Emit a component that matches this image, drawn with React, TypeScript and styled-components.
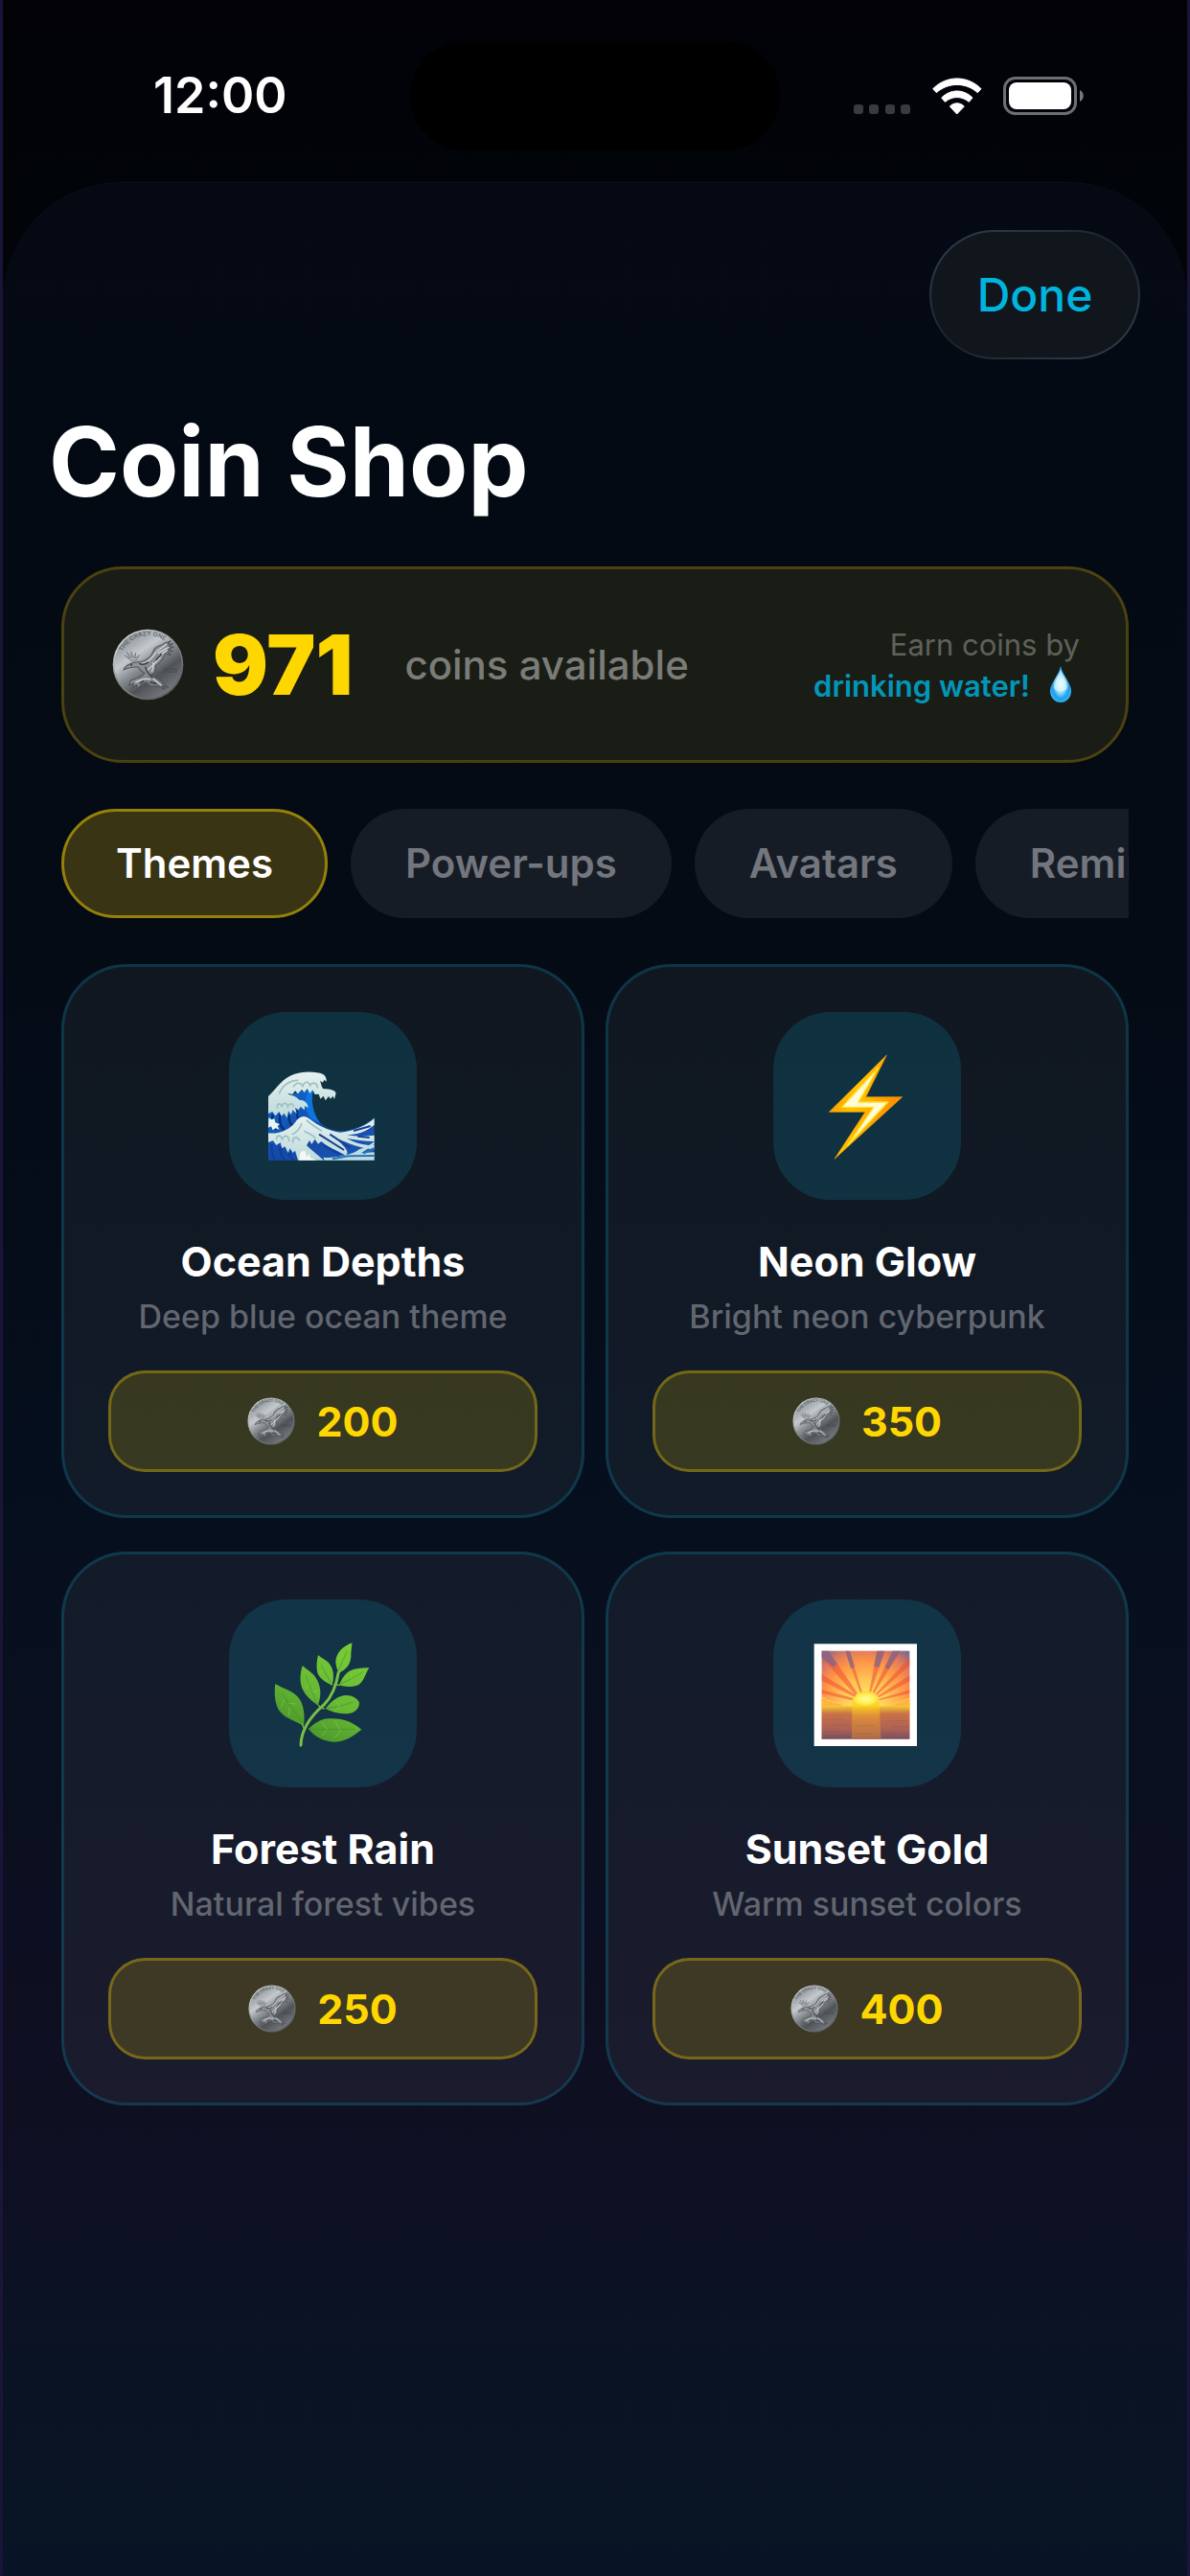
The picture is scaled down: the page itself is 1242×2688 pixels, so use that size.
import React, { useId, useState } from "react";
import styled, { createGlobalStyle } from "styled-components";

const GlobalStyle = createGlobalStyle`
  *, *::before, *::after { box-sizing: border-box; }
  body {
    margin: 0;
    background: #02040a;
    color: #fff;
    font-family: Inter, "Liberation Sans", sans-serif;
    -webkit-font-smoothing: antialiased;
  }
  button { font-family: inherit; cursor: pointer; }
`;

const Screen = styled.div`
  display: flex;
  flex-direction: column;
  min-height: 100vh;
  border: solid #1a1538;
  border-width: 0 3px;
  background: linear-gradient(#020208 0, #010408 190px, #010408 100%);
`;

const StatusBar = styled.header`
  display: grid;
  grid-template-columns: 1fr 386px 1fr;
  align-items: center;
  height: 190px;
  padding-top: 10px;
`;

const Clock = styled.time`
  padding-left: 157px;
  font-size: 52px;
  line-height: 60px;
  font-weight: 600;
`;

const Island = styled.div`
  height: 114px;
  border-radius: 57px;
  background: #000;
`;

const StatusIcons = styled.div`
  display: flex;
  justify-content: flex-end;
  align-items: center;
  padding-right: 106px;
  gap: 22px;
`;

const Sheet = styled.main`
  flex: 1;
  border-radius: 124px 124px 0 0;
  border-top: 1px solid #0c1016;
  background: linear-gradient(
    #050914 0%,
    #030a13 14%,
    #040b15 32%,
    #060f1e 56%,
    #0f0f22 81%,
    #0a1324 91%,
    #081425 100%
  );
`;

const Toolbar = styled.div`
  display: flex;
  justify-content: flex-end;
  padding: 49px 49px 0;
`;

const DoneButton = styled.button`
  width: 220px;
  height: 135px;
  padding: 0;
  border: 2px solid transparent;
  border-radius: 68px;
  background:
    linear-gradient(#11161c, #11161c) padding-box,
    linear-gradient(150deg, #2c3747 15%, #1c222c 50%, #2c3747 85%) border-box;
  color: #00b4de;
  font-size: 48px;
  line-height: 60px;
  font-weight: 500;
`;

const Title = styled.h1`
  margin: 46px 0 48px;
  padding-left: 48px;
  font-size: 100px;
  line-height: 122px;
  font-weight: 700;
`;

const Content = styled.div`
  display: flex;
  flex-direction: column;
  gap: 48px;
  padding: 0 61px;
`;

const Balance = styled.section`
  display: flex;
  align-items: center;
  height: 205px;
  padding: 0 48px 0 50px;
  border: 3px solid #4b4210;
  border-radius: 64px;
  background: #1a1d16;
`;

const Amount = styled.strong`
  margin-left: 30px;
  color: #ffd700;
  font-size: 86px;
  line-height: 100px;
  font-weight: 900;
`;

const AmountLabel = styled.span`
  flex: 1;
  margin-left: 54px;
  color: #7a7c78;
  font-size: 42px;
  line-height: 52px;
  font-weight: 500;
`;

const EarnHint = styled.p`
  margin: 0;
  color: #5f615b;
  font-size: 31px;
  line-height: 43px;
  text-align: right;
`;

const EarnAction = styled.span`
  display: flex;
  align-items: center;
  justify-content: flex-end;
  gap: 16px;
  color: #0297b9;
  font-weight: 600;
`;

const Tabs = styled.div`
  display: flex;
  gap: 24px;
  overflow: hidden;
`;

const Tab = styled.button<{ $active: boolean }>`
  flex: none;
  height: 114px;
  padding: 0 54px;
  border: 3px solid ${(p) => (p.$active ? "#94800b" : "transparent")};
  border-radius: 57px;
  background: ${(p) => (p.$active ? "#383414" : "#161c26")};
  color: ${(p) => (p.$active ? "#fff" : "#73767d")};
  font-size: 42px;
  line-height: 52px;
  font-weight: 600;
`;

const Grid = styled.ul`
  display: grid;
  grid-template-columns: repeat(2, minmax(0, 1fr));
  gap: 35px 22px;
  margin: 0;
  padding: 0;
  list-style: none;
`;

const Card = styled.li`
  display: flex;
  flex-direction: column;
  align-items: center;
  padding: 47px 46px 45px;
  border: 3px solid rgba(0, 180, 222, 0.2);
  border-radius: 68px;
  background: rgba(255, 255, 255, 0.05);
`;

const Tile = styled.div`
  width: 196px;
  height: 196px;
  border-radius: 60px;
  background: rgba(10, 180, 215, 0.17);
  svg { display: block; }
`;

const ItemName = styled.h2`
  margin: 38px 0 0;
  font-size: 43px;
  line-height: 52px;
  font-weight: 700;
`;

const ItemText = styled.p`
  margin: 12px 0 0;
  color: #62666f;
  font-size: 34px;
  line-height: 40px;
  font-weight: 500;
`;

const PriceButton = styled.button`
  display: flex;
  align-items: center;
  justify-content: center;
  gap: 22px;
  align-self: stretch;
  height: 106px;
  margin-top: 36px;
  padding: 0;
  border: 3px solid rgba(255, 215, 0, 0.3);
  border-radius: 38px;
  background: rgba(255, 215, 0, 0.16);
  color: #ffd700;
  font-size: 43px;
  line-height: 52px;
  font-weight: 700;
`;

function Coin({ size }: { size: number }) {
  const id = useId();
  return (
    <svg width={size} height={size} viewBox="52 49 224 224" aria-hidden="true">
      <defs>
        <linearGradient id={`${id}f`} x1="0.15" y1="0.1" x2="0.75" y2="0.95">
          <stop offset="0" stopColor="#8b9095" />
          <stop offset="0.3" stopColor="#c4c9cd" />
          <stop offset="0.5" stopColor="#878c91" />
          <stop offset="0.72" stopColor="#4f5358" />
          <stop offset="1" stopColor="#75797e" />
        </linearGradient>
        <linearGradient id={`${id}r`} x1="0.1" y1="0" x2="0.8" y2="1">
          <stop offset="0" stopColor="#eef1f3" />
          <stop offset="0.55" stopColor="#7e8387" />
          <stop offset="1" stopColor="#55595c" />
        </linearGradient>
        <linearGradient id={`${id}e`} x1="0" y1="0" x2="1" y2="1">
          <stop offset="0" stopColor="#a3a8ac" />
          <stop offset="0.6" stopColor="#83888d" />
          <stop offset="1" stopColor="#5d6166" />
        </linearGradient>
        <path id={`${id}t`} d="M84 121 A90 90 0 0 1 250 131" />
      </defs>
      <circle cx="164" cy="161" r="110" fill={`url(#${id}r)`} />
      <circle cx="164" cy="160" r="105" fill={`url(#${id}f)`} />
      <text fill="#64696e" fontSize="19" fontWeight="600">
        <textPath href={`#${id}t`}>THE CRAZY ONE</textPath>
      </text>
      <path
        d="M113 151 L91 132 L107 141 L98 122 L113 139 L111 121 L119 139 L126 124 L124 141 L137 131 L128 148 Z"
        fill="#a4a9ad" stroke="#6b7075" strokeWidth="2"
      />
      <path
        d="M88 177 C93 163 113 154 134 153 C150 152 163 145 174 132 C179 121 182 113 188 108 C194 102 205 103 215 94 C222 90 230 91 236 87 L224 98 L243 95 L226 106 L244 106 L226 114 L242 119 L224 121 L236 132 L218 127 C213 144 199 157 187 166 C191 182 182 191 172 193 C193 203 211 213 226 232 L208 227 L218 239 L194 228 L173 229 L158 215 C150 219 139 225 133 235 L128 224 L116 233 L119 220 L105 225 L111 210 L125 205 C139 200 148 197 153 187 C142 182 136 174 133 169 C120 168 107 171 99 173 Z"
        fill={`url(#${id}e)`} stroke="#4e5358" strokeWidth="3"
      />
      <path
        d="M146 158 C163 154 176 142 189 123 M162 178 C171 171 185 160 202 139 M126 216 C142 207 156 202 171 207 M177 203 L205 225 M176 182 C181 172 182 164 179 156 M192 119 L222 97 M196 125 L228 107 M199 133 L224 116"
        fill="none" stroke="#d3d7da" strokeWidth="4" strokeLinecap="round"
      />
      <path
        d="M156 169 C160 184 166 192 178 202 M137 158 C148 163 156 160 164 154 M190 146 L205 128 M171 216 L188 220 M140 219 L150 212"
        fill="none" stroke="#34393e" strokeWidth="4" strokeLinecap="round"
      />
      <circle cx="112" cy="162" r="3" fill="#33383c" />
      <text x="209" y="187" fill="#474b50" fontSize="18" fontWeight="600">2020</text>
    </svg>
  );
}

function WaveIcon() {
  const id = useId();
  return (
    <svg width="196" height="196" viewBox="56 48 588 588" role="img" aria-label="Wave">
      <defs>
        <linearGradient id={`${id}b`} x1="0" y1="0" x2="1" y2="1">
          <stop offset="0" stopColor="#0d6fd0" />
          <stop offset="0.5" stopColor="#1549a6" />
          <stop offset="1" stopColor="#1b58b6" />
        </linearGradient>
        <linearGradient id={`${id}f`} x1="0" y1="0" x2="0" y2="1">
          <stop offset="0" stopColor="#e6f2f0" />
          <stop offset="1" stopColor="#bdd9da" />
        </linearGradient>
      </defs>
      <path d="M179 330 L300 290 L320 292 C311 325 318 362 341 393 C364 417 393 423 424 419 C455 412 487 400 511 377 V512 H179 Z" fill={`url(#${id}b)`} />
      <path d="M300 300 C291 330 293 365 316 384 L341 396 C318 365 311 325 320 292 Z" fill="#0f74df" />
      <path d="M192 368 C190 390 194 404 202 416 M216 366 C212 390 218 408 229 417 M244 370 C241 385 249 401 258 408 M270 356 C266 372 273 386 279 390" fill="none" stroke="#0b2b74" strokeWidth="7" />
      <path
        d="M179 312 C197 296 216 264 247 248 C282 230 331 234 349 242 C358 246 362 255 361 266 L354 260 L350 269 L341 263 C347 278 345 286 354 289 C370 289 388 292 391 302 L386 321 L381 311 L374 320 L368 312 L358 325 L352 311 L342 320 L337 305 L325 306 L318 292 L309 303 L301 288 L292 300 L284 291 L272 304 L263 295 L254 306 L240 302 C245 310 262 306 276 323 C292 323 303 332 304 348 L294 342 L292 355 L280 344 L274 355 L263 347 L268 366 L255 355 L251 370 L242 358 L238 380 L229 365 L220 374 L213 360 L201 373 L192 360 L179 366 Z"
        fill={`url(#${id}f)`}
      />
      <path d="M214 303 C221 280 246 262 271 262 M258 281 C267 267 280 268 287 280 C293 263 306 265 310 278 C318 265 332 271 333 284 M207 348 C206 333 217 331 222 345 C224 329 237 331 240 344 C246 332 256 334 258 344" fill="none" stroke="#9fc0c5" strokeWidth="5" strokeLinecap="round" />
      <path d="M180 379 L190 385 L198 381 L201 394 L215 399 L208 405 L214 416 L202 412 L193 418 L188 406 L179 410 Z" fill="#eaf4f3" />
      <path
        d="M179 427 C212 432 248 414 262 395 C275 373 292 370 306 381 C336 405 370 420 405 425 C443 421 482 407 511 381 V401 C485 423 458 432 426 432 C456 439 486 436 511 434 V453 C482 453 452 447 425 444 C453 459 484 467 511 465 V478 C470 477 427 457 393 445 C416 469 437 487 421 497 C394 481 367 472 345 453 L335 461 L325 446 L315 462 L308 450 L299 466 L315 480 L353 512 H272 L263 482 L256 489 L247 475 L241 489 L231 469 L222 475 L217 457 L204 465 L194 451 L179 456 Z"
        fill={`url(#${id}f)`}
      />
      <path d="M276 512 C276 490 283 480 295 484 L300 502 L307 491 L312 505 L330 512 Z" fill="#f2f9f8" />
      <path d="M352 503 C381 507 440 497 464 478 C481 473 499 464 511 453 V463 L470 490 L511 487 V512 H354 Z" fill="#bedbe1" />
      <path d="M380 508 L430 499 L510 498 M477 491 L511 474" fill="none" stroke="#2574b9" strokeWidth="6" />
      <path d="M351 466 L403 494 M338 431 L416 480 M372 431 L434 472 M446 420 L499 405 M459 437 L496 441" fill="none" stroke="#153f95" strokeWidth="6" />
      <path d="M205 448 C203 434 216 430 223 446 C229 429 244 436 244 453 M256 458 C254 440 268 434 278 451 M291 421 C303 427 319 432 327 443 M284 396 C278 412 267 427 253 431 M298 386 C315 402 333 412 347 421" fill="none" stroke="#9ac0c5" strokeWidth="5" />
      <path d="M190 461 C188 480 192 498 199 510 M216 470 C215 490 222 502 230 511 M246 489 C246 499 251 506 259 512" fill="none" stroke="#0d3f9c" strokeWidth="6" />
    </svg>
  );
}

function BoltIcon() {
  const id = useId();
  return (
    <svg width="196" height="196" viewBox="53 48 588 588" role="img" aria-label="Lightning">
      <defs>
        <linearGradient id={`${id}o`} x1="0" y1="0" x2="1" y2="0.4">
          <stop offset="0" stopColor="#ff8a00" />
          <stop offset="0.45" stopColor="#ffc400" />
          <stop offset="1" stopColor="#ff8a00" />
        </linearGradient>
      </defs>
      <path d="M408 183 L228 361 H341 L245 508 L457 314 H343 Z" fill={`url(#${id}o)`} stroke="#f39a0a" strokeWidth="2" />
      <path d="M382 222 L268 346 H367 L286 466 L412 330 H320 Z" fill="#fffbd6" stroke="#ffe12b" strokeWidth="4" strokeLinejoin="round" />
    </svg>
  );
}

function HerbIcon() {
  const id = useId();
  return (
    <svg width="196" height="196" viewBox="56 57 588 588" role="img" aria-label="Herb">
      <defs>
        <linearGradient id={`${id}l`} gradientUnits="userSpaceOnUse" x1="430" y1="200" x2="260" y2="510">
          <stop offset="0" stopColor="#78cc35" />
          <stop offset="0.5" stopColor="#68b934" />
          <stop offset="1" stopColor="#438d28" />
        </linearGradient>
      </defs>
      <g fill={`url(#${id}l)`}>
        <path d="M441 193 C411 204 390 226 390 254 C391 266 395 277 400 287 C424 276 436 260 438 236 C438 216 441 205 441 193 Z" />
        <path d="M335 231 C330 251 329 272 333 287 C341 306 360 317 379 326 C385 303 385 280 373 262 C364 247 347 242 335 231 Z" />
        <path d="M495 271 C471 271 442 273 425 287 C414 297 407 309 401 325 C419 332 444 332 462 324 C480 311 483 288 495 271 Z" />
        <path d="M286 264 C279 287 276 314 286 337 C296 361 317 375 334 389 C344 363 346 338 333 311 C322 287 302 279 286 264 Z" />
        <path d="M358 399 C374 377 394 360 420 357 C440 356 460 366 464 381 C463 401 448 414 424 415 C399 415 379 409 358 399 Z" />
        <path d="M201 321 C197 347 199 379 211 402 C229 429 262 437 290 452 C294 423 291 391 277 369 C257 341 225 337 201 321 Z" />
        <path d="M304 462 C324 446 341 431 368 430 C412 427 443 441 471 464 C445 486 415 504 382 503 C344 500 323 483 304 462 Z" />
      </g>
      <path d="M281 514 C282 451 334 403 354 386 C382 358 393 320 399 285" fill="none" stroke="#79bf48" strokeWidth="9" strokeLinecap="round" />
      <path
        d="M398 280 L426 218 M376 319 L344 262 M405 322 C430 309 451 301 475 284 M332 384 L296 296 M349 398 C384 397 417 389 443 378 M290 448 L222 353 M307 462 C361 465 406 464 450 463"
        fill="none" stroke="#3c8b25" strokeOpacity="0.55" strokeWidth="3"
      />
      <path
        d="M228 369 L220 394 M246 394 L244 421 M244 382 L265 384 M307 322 L296 338 M318 347 L333 344 M345 440 L364 463 M387 437 L402 463 M346 483 L364 464 M389 489 L407 464 M388 374 L404 390 M385 408 L404 391 M438 288 L441 304 M348 274 L344 287 M411 237 L399 242"
        fill="none" stroke="#8bcf52" strokeOpacity="0.55" strokeWidth="3"
      />
      <path d="M290 460 L284 445 M354 399 L344 396 M384 324 L404 325 M336 388 L345 397" stroke="#74b948" strokeWidth="4" />
    </svg>
  );
}

function SunriseIcon() {
  const id = useId();
  return (
    <svg width="196" height="196" viewBox="53 57 588 588" role="img" aria-label="Sunrise">
      <defs>
        <radialGradient id={`${id}s`} gradientUnits="userSpaceOnUse" cx="342" cy="385" r="205">
          <stop offset="0" stopColor="#ffef62" />
          <stop offset="0.35" stopColor="#ffc957" />
          <stop offset="0.65" stopColor="#ff9647" />
          <stop offset="0.85" stopColor="#dc775e" />
          <stop offset="1" stopColor="#846b87" />
        </radialGradient>
        <linearGradient id={`${id}w`} x1="0" y1="0" x2="0" y2="1">
          <stop offset="0" stopColor="#f3c62f" />
          <stop offset="0.23" stopColor="#c97248" />
          <stop offset="0.7" stopColor="#ad6155" />
          <stop offset="1" stopColor="#76505f" />
        </linearGradient>
        <linearGradient id={`${id}p`} x1="0" y1="0" x2="0" y2="1">
          <stop offset="0" stopColor="#f9c921" />
          <stop offset="0.3" stopColor="#dd8d3a" />
          <stop offset="1" stopColor="#b06a4a" />
        </linearGradient>
        <radialGradient id={`${id}c`}>
          <stop offset="0" stopColor="#ffff9a" />
          <stop offset="0.7" stopColor="#ffed52" />
          <stop offset="1" stopColor="#fcd421" />
        </radialGradient>
      </defs>
      <rect x="181" y="196" width="322" height="320" fill="#fff" />
      <rect x="205" y="218" width="275" height="276" fill={`url(#${id}s)`} />
      <path
        d="M205 218 H226 L317 350 L310 356 L205 240 Z M279 218 H292 L331 346 L325 348 Z M378 218 H402 L359 347 L354 345 Z M427 218 H451 L369 351 L364 347 Z M480 239 V263 L377 357 L373 353 Z M205 292 L313 356 L307 362 L205 311 Z M205 339 L304 366 L300 373 L205 351 Z M480 295 V314 L383 364 L380 359 Z M480 340 V351 L385 373 L384 369 Z"
        fill="#f14f32" fillOpacity="0.55"
      />
      <path d="M205 218 H226 L253 257 L242 270 L205 238 Z M279 218 H293 L308 267 L296 274 Z M378 218 H402 L385 269 L368 267 Z M427 218 H451 L414 276 L402 269 Z" fill="#6e6896" fillOpacity="0.65" />
      <path d="M205 393 V366 C211 360 219 369 223 373 C230 371 238 375 242 380 C251 375 256 386 268 384 L271 393 Z M418 393 C426 384 431 386 436 383 C441 375 450 381 454 375 C462 376 465 367 480 367 V393 Z" fill="#ffb43f" stroke="#ffd260" strokeWidth="3" />
      <rect x="205" y="391" width="275" height="103" fill={`url(#${id}w)`} />
      <path d="M300 392 H386 L390 494 H299 Z" fill={`url(#${id}p)`} />
      <path d="M299 391 A43 45 0 0 1 385 391 Z" fill={`url(#${id}c)`} />
      <path d="M208 432 H275 M239 451 H292 M205 470 H262 M403 437 H472 M423 455 H478 M398 475 H449 M222 485 H292 M316 452 H370 M307 478 H361" stroke="#824e58" strokeOpacity="0.25" strokeWidth="3" />
    </svg>
  );
}

function Droplet() {
  const id = useId();
  return (
    <svg width="36" height="40" viewBox="0 0 36 40" role="img" aria-label="Droplet">
      <defs>
        <radialGradient id={`${id}d`} cx="0.5" cy="0.5" r="0.55">
          <stop offset="0" stopColor="#effcff" />
          <stop offset="0.4" stopColor="#9ee3fb" />
          <stop offset="0.72" stopColor="#1e9cee" />
          <stop offset="1" stopColor="#35bdf5" />
        </radialGradient>
      </defs>
      <path d="M16 0 C14 10 5 18 5 26 A11 12 0 0 0 27 26 C27 18 18 10 16 0 Z" fill={`url(#${id}d)`} />
      <path d="M16 2 C15 11 9 17 9 22 C10 28 22 28 23 22 C23 17 17 11 16 2 Z" fill="#eafaff" fillOpacity="0.6" />
    </svg>
  );
}

function SignalDots() {
  return (
    <svg width="60" height="40" viewBox="0 0 60 40" aria-hidden="true">
      {[0, 16, 33, 49].map((x) => (
        <rect key={x} x={x} y="29" width="10" height="10" rx="3" fill="#393a3d" />
      ))}
    </svg>
  );
}

function Wifi() {
  return (
    <svg width="52" height="40" viewBox="396 89 156 120" role="img" aria-label="Wi-Fi">
      <g fill="#fff" stroke="#fff" strokeWidth="3" strokeLinejoin="round">
        <path d="M398 127 C441 84 506 84 549 127 L538 139 C501 106 446 106 409 139 Z" />
        <path d="M425 155 C453 127 494 127 522 155 L511 168 C488 149 459 149 436 168 Z" />
        <path d="M451 182 C464 169 483 169 496 182 L473 206 Z" />
      </g>
    </svg>
  );
}

function Battery() {
  return (
    <svg width="86" height="40" viewBox="0 0 172 80" role="img" aria-label="Battery full">
      <rect x="3" y="3" width="148" height="74" rx="22" fill="none" stroke="#6e6f72" strokeWidth="6" />
      <rect x="12" y="12" width="130" height="56" rx="16" fill="#fff" />
      <path d="M160 28 C170 32 170 48 160 52 Z" fill="#77787b" />
    </svg>
  );
}

const TABS = ["Themes", "Power-ups", "Avatars", "Reminders"];

const ITEMS = [
  { name: "Ocean Depths", text: "Deep blue ocean theme", price: 200, Icon: WaveIcon },
  { name: "Neon Glow", text: "Bright neon cyberpunk", price: 350, Icon: BoltIcon },
  { name: "Forest Rain", text: "Natural forest vibes", price: 250, Icon: HerbIcon },
  { name: "Sunset Gold", text: "Warm sunset colors", price: 400, Icon: SunriseIcon },
];

export default function App() {
  const [tab, setTab] = useState(TABS[0]);
  return (
    <>
      <GlobalStyle />
      <Screen>
        <StatusBar>
          <Clock>12:00</Clock>
          <Island />
          <StatusIcons>
            <SignalDots />
            <Wifi />
            <Battery />
          </StatusIcons>
        </StatusBar>
        <Sheet>
          <Toolbar>
            <DoneButton type="button">Done</DoneButton>
          </Toolbar>
          <Title>Coin Shop</Title>
          <Content>
            <Balance>
              <Coin size={75} />
              <Amount>971</Amount>
              <AmountLabel>coins available</AmountLabel>
              <EarnHint>
                Earn coins by
                <EarnAction>
                  drinking water!
                  <Droplet />
                </EarnAction>
              </EarnHint>
            </Balance>
            <Tabs role="tablist">
              {TABS.map((name) => (
                <Tab
                  key={name}
                  type="button"
                  role="tab"
                  aria-selected={tab === name}
                  $active={tab === name}
                  onClick={() => setTab(name)}
                >
                  {name}
                </Tab>
              ))}
            </Tabs>
            <Grid>
              {ITEMS.map(({ name, text, price, Icon }) => (
                <Card key={name}>
                  <Tile>
                    <Icon />
                  </Tile>
                  <ItemName>{name}</ItemName>
                  <ItemText>{text}</ItemText>
                  <PriceButton type="button">
                    <Coin size={50} />
                    {price}
                  </PriceButton>
                </Card>
              ))}
            </Grid>
          </Content>
        </Sheet>
      </Screen>
    </>
  );
}
